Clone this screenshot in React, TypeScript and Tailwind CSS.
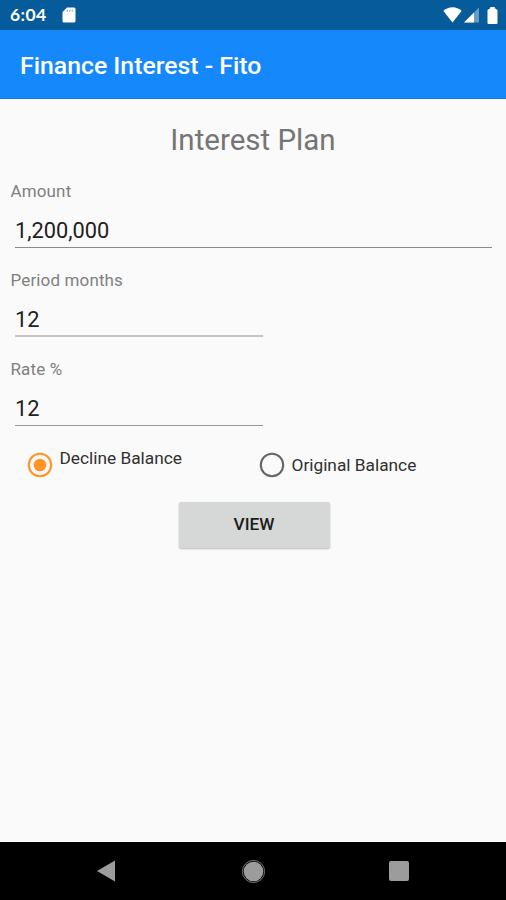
import { useState } from 'react';

interface FieldProps {
  label: string;
  value: string;
  lineClass: string;
}

function StatusBar() {
  return (
    <div className="flex h-[30px] shrink-0 items-center bg-[#065b9b] pl-[10px] pr-2 text-white">
      <span className="w-[52px] font-['Lato',sans-serif] text-[17.5px] font-bold leading-[30px] tracking-[0.4px]">6:04</span>
      <svg width="14" height="16" viewBox="0 0 14 16" fill="currentColor">
        <path d="M5 0.5h7a1.5 1.5 0 0 1 1.5 1.5v12a1.5 1.5 0 0 1-1.5 1.5H2A1.5 1.5 0 0 1 .5 14V5z" />
        <path d="M4.8 2.8h1.200v2H4.800zM7.200 2.800h1.200v2H7.200zM9.600 2.800h1.200v2H9.600z" fill="#8db3d1" />
      </svg>
      <svg className="ml-auto" width="19" height="16" viewBox="0 0 19 16" fill="currentColor">
        <path d="M9.5 15.5 0.4 4C3 1.6 6 .3 9.5 .3s6.5 1.3 9.1 3.7z" />
      </svg>
      <svg className="ml-[2px]" width="15" height="16" viewBox="0 0 15 16" fill="currentColor">
        <path opacity="0.4" d="M15 0.5v15H0z" />
        <path d="M10 5.5v10H0z" />
      </svg>
      <svg className="ml-[8px]" width="11" height="17" viewBox="0 0 11 17" fill="currentColor">
        <path d="M3.2 0h4.6v1.2L10.500 3v13a1 1 0 0 1-1 1h-8a1 1 0 0 1-1-1V3L3.200 1.200z" />
      </svg>
    </div>
  );
}

function Field({ label, value, lineClass }: FieldProps) {
  return (
    <div className="h-[89px]">
      <div className="pl-[10.5px] text-[17px] leading-5 tracking-[0.14px] text-[#808080]">{label}</div>
      <div className={`ml-[15px] mt-[13px] text-[21.8px] leading-[33px] text-[#212121] ${lineClass}`}>{value}</div>
    </div>
  );
}

function Radio({ checked }: { checked: boolean }) {
  return (
    <svg
      className={checked ? 'shrink-0 text-[#ff9325]' : 'shrink-0 text-[#666666]'}
      width="26"
      height="26"
      viewBox="0 0 26 26"
    >
      <circle cx="13" cy="13" r="11.2" fill="none" stroke="currentColor" strokeWidth="2.1" />
      {checked && <circle cx="13" cy="13" r="6.3" fill="currentColor" />}
    </svg>
  );
}

function NavBar() {
  return (
    <div className="flex h-[58px] shrink-0 items-center bg-black pl-[96px] text-[#9c9c9c]">
      <svg width="20" height="22" viewBox="0 0 20 22" fill="currentColor">
        <path d="M19 0.5v21L1 11z" />
      </svg>
      <svg className="ml-[125px]" width="25" height="25" viewBox="0 0 25 25" fill="currentColor">
        <circle cx="12.5" cy="12.5" r="9.8" />
        <circle cx="12.5" cy="12.5" r="11.1" fill="none" stroke="#777777" strokeWidth="1" />
      </svg>
      <span className="ml-[123px] h-[20px] w-[20px] rounded-[2px] bg-[#9c9c9c]" />
    </div>
  );
}

export default function App() {
  const [plan, setPlan] = useState<'decline' | 'original'>('decline');

  return (
    <div className="flex h-[900px] w-[506px] flex-col overflow-hidden bg-[#fafafa] font-['Roboto',sans-serif]">
      <StatusBar />
      <header className="flex h-[69px] shrink-0 items-center border-b border-[#1078e8] bg-[#1589fc] pl-5 pt-[4px]">
        <h1 className="text-[24.8px] font-medium leading-none text-white">Finance Interest - Fito</h1>
      </header>

      <main className="flex-1">
        <h2 className="pt-[23px] text-center text-[29.5px] leading-[36px] text-[#757575]">Interest Plan</h2>
        <div className="mt-[23px]">
          <Field label="Amount" value="1,200,000" lineClass="h-[34px] w-[477px] border-b border-[#8a8a8a]" />
          <Field label="Period months" value="12" lineClass="h-[34px] w-[248px] border-b-2 border-[#c4c4c4]" />
          <Field label="Rate %" value="12" lineClass="h-[34px] w-[248px] border-b border-[#999999]" />
        </div>

        {/* Balance type */}
        <div className="mt-[4px] flex h-[26px] pl-[27px] text-[17.3px] leading-[26px] text-[#303030]">
          <button className="flex w-[232px] gap-[6.5px]" onClick={() => setPlan('decline')}>
            <Radio checked={plan === 'decline'} />
            <span className="-mt-[7px]">Decline Balance</span>
          </button>
          <button className="flex gap-[6.5px]" onClick={() => setPlan('original')}>
            <Radio checked={plan === 'original'} />
            <span>Original Balance</span>
          </button>
        </div>

        <button className="ml-[178.500px] mt-[23.500px] block h-[46px] w-[151px] rounded-[2px] bg-[#d6d7d7] pt-px text-[17.2px] font-medium text-[#1c1c1c] shadow-[0_1px_2px_rgba(0,0,0,0.25)]">
          VIEW
        </button>
      </main>

      <NavBar />
    </div>
  );
}
